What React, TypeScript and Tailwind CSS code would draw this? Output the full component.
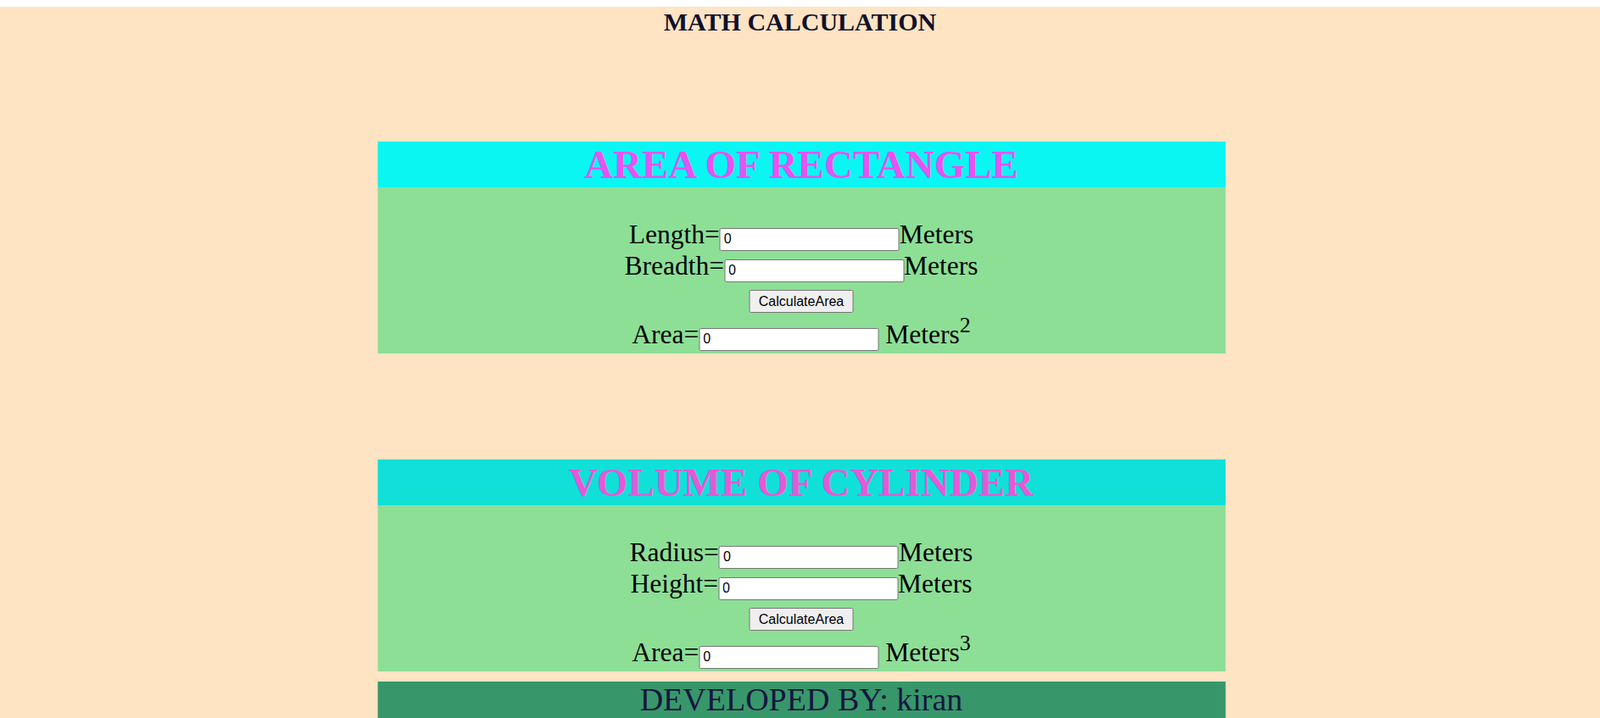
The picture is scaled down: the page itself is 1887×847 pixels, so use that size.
import React from 'react';

const serif = "font-['Liberation_Serif','Times_New_Roman',serif]";
const sans = "font-['Liberation_Sans',Arial,sans-serif]";

function Field({ label, suffix, gap }: { label: string; suffix: React.ReactNode; gap?: boolean }) {
  return (
    <div className="h-[37px] leading-[37px] text-center whitespace-nowrap">
      {label}
      <input
        readOnly
        defaultValue="0"
        className={`${sans} inline-block align-baseline w-[212px] h-[27px] bg-white border border-[#767676] rounded-[2px] pl-[4px] text-[16px] leading-[20px] text-black outline-none`}
      />
      {gap ? ' ' : ''}
      {suffix}
    </div>
  );
}

function CalcBox({
  title,
  headBg,
  headText,
  first,
  second,
  power,
}: {
  title: string;
  headBg: string;
  headText: string;
  first: string;
  second: string;
  power: string;
}) {
  return (
    <section className="w-[1000px] mx-auto translate-x-[1.5px]">
      <h2 className={`h-[54px] leading-[54px] text-center text-[47px] font-bold ${headBg} ${headText}`}>{title}</h2>
      <div className="h-[196px] bg-[#8ddf96] text-[31.5px] text-black pt-[37px]">
        <Field label={first} suffix="Meters" />
        <Field label={second} suffix="Meters" />
        <div className="flex justify-center pt-[10px] pb-[7px]">
          <button
            className={`${sans} w-[123px] h-[27px] bg-[#efefef] border border-[#767676] rounded-[2px] text-[16px] text-black`}
          >
            CalculateArea
          </button>
        </div>
        <Field
          label="Area="
          gap
          suffix={
            <>
              Meters<sup className="text-[26px] top-[-13px]">{power}</sup>
            </>
          }
        />
      </div>
    </section>
  );
}

export default function App() {
  return (
    <div className={`${serif} bg-white pt-[8px]`}>
      <div className="bg-[#ffe4c4] min-h-[839px]">
        <h1 className="h-[37px] pt-[3px] leading-[30px] text-center text-[30px] font-bold text-[#10102a]">
          MATH CALCULATION
        </h1>
        <div className="pt-[122px]">
          <CalcBox
            title="AREA OF RECTANGLE"
            headBg="bg-[#0af6f2]"
            headText="text-[#e653f2]"
            first="Length="
            second="Breadth="
            power="2"
          />
        </div>
        <div className="pt-[125px]">
          <CalcBox
            title="VOLUME OF CYLINDER"
            headBg="bg-[#10e0d8]"
            headText="text-[#e659d6]"
            first="Radius="
            second="Height="
            power="3"
          />
        </div>
        <footer className="mt-[12px] w-[1000px] mx-auto translate-x-[1.5px] h-[43px] bg-[#37976a] text-center text-[38px] leading-[43px] text-[#161640]">
          DEVELOPED BY: kiran
        </footer>
      </div>
    </div>
  );
}
